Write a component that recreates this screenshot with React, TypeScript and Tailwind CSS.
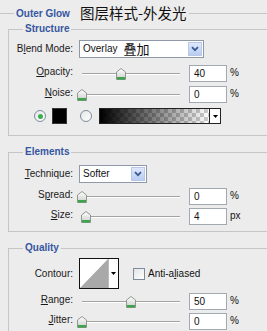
import type { ReactNode } from 'react';

const line = 'bg-[#c6c6c6]';

function U({ children }: { children: ReactNode }) {
  return <span className="underline underline-offset-[1px]">{children}</span>;
}

function Label({ children, className = '' }: { children: ReactNode; className?: string }) {
  return <div className={`w-[64px] shrink-0 text-right text-[10px] leading-[12px] text-[#1a1a1a] ${className}`}>{children}</div>;
}

function Chevron() {
  return (
    <div className="flex h-full w-[14px] items-center justify-center border border-[#b7c8e8] bg-[linear-gradient(#dfe8fb,#b9cdf3)]">
      <svg width="8" height="6" viewBox="0 0 8 6">
        <path d="M1 1.2 L4 4.2 L7 1.2" fill="none" stroke="#3d5a8e" strokeWidth="1.8" />
      </svg>
    </div>
  );
}

function Select({ width, children }: { width: string; children: ReactNode }) {
  return (
    <div className={`ml-[6px] flex h-[18px] ${width} items-center border border-[#8e98a6] bg-white p-px`}>
      <div className="flex flex-1 items-center pl-[2px] text-[10px] leading-[12px]">{children}</div>
      <Chevron />
    </div>
  );
}

function Thumb({ left }: { left: number }) {
  return (
    <svg className="absolute top-[3px]" style={{ left }} width="10" height="12" viewBox="0 0 10 12">
      <defs>
        <linearGradient id="tg" x1="0" y1="0" x2="0" y2="1">
          <stop offset="0" stopColor="#ffffff" />
          <stop offset="1" stopColor="#c9cdc9" />
        </linearGradient>
      </defs>
      <path d="M5 0.5 L9.5 4 V11.5 H0.5 V4 Z" fill="url(#tg)" stroke="#8f978f" />
      <rect x="1" y="9" width="8" height="2.5" fill="#3fa34d" />
    </svg>
  );
}

function Slider({ pct }: { pct: number }) {
  return (
    <div className="relative ml-[6px] h-[17px] w-[106px] shrink-0">
      <div className="absolute left-[3px] right-[5px] top-[8px] h-[2px] border-t border-[#a3a3a3] bg-white" />
      <Thumb left={3 + pct * 98 - 5} />
    </div>
  );
}

function NumRow({ label, value, pct, unit, className = '' }: { label: ReactNode; value: string; pct: number; unit: string; className?: string }) {
  return (
    <div className={`flex h-[17px] items-center ${className}`}>
      <Label className="mb-[3px]">{label}</Label>
      <Slider pct={pct} />
      <div className="ml-[4px] flex h-[17px] w-[38px] items-center border border-[#a2a9b3] bg-white pl-[4px] text-[10px]">{value}</div>
      <div className="ml-[3px] mb-[3px] text-[10px]">{unit}</div>
    </div>
  );
}

function Radio({ on }: { on?: boolean }) {
  return (
    <div className="flex h-[12px] w-[12px] items-center justify-center rounded-full border border-[#7e8b9c] bg-[linear-gradient(135deg,#e4e6e8,#ffffff)]">
      {on && <div className="h-[5px] w-[5px] rounded-full bg-[#38b04a]" />}
    </div>
  );
}

function Group({ title, children, className = '' }: { title: string; children: ReactNode; className?: string }) {
  return (
    <fieldset className={`ml-[8px] w-[300px] border border-[#c6c6c6] ${className}`}>
      <legend className="ml-[14px] px-[2px] text-[10px] font-bold leading-[12px] text-[#3656a0]">{title}</legend>
      {children}
    </fieldset>
  );
}

export default function App() {
  return (
    <div className="h-[331px] w-[267px] overflow-hidden bg-[#ececec] font-['Liberation_Sans','Noto_Sans_CJK_SC',Arial,sans-serif] text-[#111]">
      <div className="flex h-[23px] items-center pt-[3px]">
        <div className={`h-px w-[14px] ${line}`} />
        <span className="ml-[2px] text-[10px] font-bold text-[#3656a0]">Outer Glow</span>
        <span className="ml-[10px] font-['Noto_Sans_CJK_SC',sans-serif] text-[14.5px] leading-[18px]">图层样式-外发光</span>
        <div className={`ml-[3px] h-px flex-1 ${line}`} />
      </div>

      <Group title="Structure" className="pb-[11px]">
        <div className="mt-[5px] flex h-[18px] items-center">
          <Label>B<U>l</U>end Mode:</Label>
          <Select width="w-[125px]">
            <span>Overlay</span>
            <span className="ml-[6px] font-['Noto_Sans_CJK_SC',sans-serif] text-[13px] leading-[14px]">叠加</span>
          </Select>
        </div>
        <NumRow className="mt-[7px]" label={<><U>O</U>pacity:</>} value="40" pct={0.4} unit="%" />
        <NumRow className="mt-[4px]" label={<><U>N</U>oise:</>} value="0" pct={0} unit="%" />
        <div className="mt-[5px] flex h-[16px] items-center">
          <div className="ml-[25px]"><Radio on /></div>
          <div className="ml-[6px] h-[16px] w-[15px] border border-[#333] bg-black" />
          <div className="ml-[13px]"><Radio /></div>
          <div className="ml-[7px] flex h-[16px] w-[122px] border border-[#222] bg-white">
            <svg width="109" height="14" viewBox="0 0 109 14">
              <defs>
                <pattern id="ck" width="8" height="8" patternUnits="userSpaceOnUse">
                  <rect width="8" height="8" fill="#ffffff" />
                  <rect width="4" height="4" fill="#cccccc" />
                  <rect x="4" y="4" width="4" height="4" fill="#cccccc" />
                </pattern>
                <linearGradient id="gg" x1="0" y1="0" x2="1" y2="0">
                  <stop offset="0" stopColor="#000" stopOpacity="1" />
                  <stop offset="1" stopColor="#000" stopOpacity="0" />
                </linearGradient>
              </defs>
              <rect width="109" height="14" fill="url(#ck)" />
              <rect width="109" height="14" fill="url(#gg)" />
            </svg>
            <div className="flex flex-1 items-center justify-center border-l border-[#222] bg-white">
              <svg width="5" height="3" viewBox="0 0 5 3"><path d="M0 0 H5 L2.5 3 Z" fill="#000" /></svg>
            </div>
          </div>
        </div>
      </Group>

      <Group title="Elements" className="mt-[10px] pb-[6px]">
        <div className="mt-[7px] flex h-[18px] items-center">
          <Label><U>T</U>echnique:</Label>
          <Select width="w-[68px]">
            <span>Softer</span>
          </Select>
        </div>
        <NumRow className="mt-[5px]" label={<>S<U>p</U>read:</>} value="0" pct={0} unit="%" />
        <NumRow className="mt-[3px]" label={<><U>S</U>ize:</>} value="4" pct={0.04} unit="px" />
      </Group>

      <Group title="Quality" className="mt-[10px] pb-[20px]">
        <div className="mt-[4px] flex h-[31px] items-center">
          <Label>Contour:</Label>
          <div className="ml-[6px] flex h-[31px] w-[40px] border border-[#111] bg-white">
            <svg width="28" height="29" viewBox="0 0 28 29">
              <path d="M0 29 L28 0 V29 Z" fill="#a9a9a9" />
            </svg>
            <div className="flex flex-1 items-center justify-center border-l border-[#bbb] bg-white">
              <svg width="5" height="3" viewBox="0 0 5 3"><path d="M0 0 H5 L2.5 3 Z" fill="#000" /></svg>
            </div>
          </div>
          <div className="ml-[14px] h-[12px] w-[12px] border border-[#7e8b9c] bg-[linear-gradient(135deg,#e2e4e6,#ffffff)]" />
          <span className="ml-[3px] text-[10px]">Anti-a<U>l</U>iased</span>
        </div>
        <NumRow className="mt-[4px]" label={<><U>R</U>ange:</>} value="50" pct={0.5} unit="%" />
        <NumRow className="mt-[3px]" label={<><U>J</U>itter:</>} value="0" pct={0} unit="%" />
      </Group>
    </div>
  );
}
